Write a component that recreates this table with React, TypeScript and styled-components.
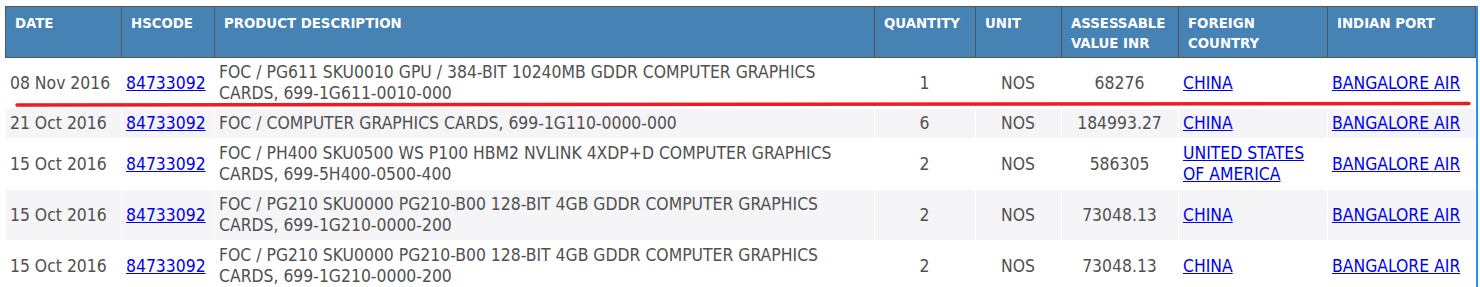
import styled, { createGlobalStyle } from "styled-components"

type Row = {
  date: string
  hscode: string
  description: string
  quantity: string
  unit: string
  value: string
  country: string
  port: string
}

const rows: Row[] = [
  {
    date: "08 Nov 2016",
    hscode: "84733092",
    description: "FOC / PG611 SKU0010 GPU / 384-BIT 10240MB GDDR COMPUTER GRAPHICS CARDS, 699-1G611-0010-000",
    quantity: "1",
    unit: "NOS",
    value: "68276",
    country: "CHINA",
    port: "BANGALORE AIR",
  },
  {
    date: "21 Oct 2016",
    hscode: "84733092",
    description: "FOC / COMPUTER GRAPHICS CARDS, 699-1G110-0000-000",
    quantity: "6",
    unit: "NOS",
    value: "184993.27",
    country: "CHINA",
    port: "BANGALORE AIR",
  },
  {
    date: "15 Oct 2016",
    hscode: "84733092",
    description: "FOC / PH400 SKU0500 WS P100 HBM2 NVLINK 4XDP+D COMPUTER GRAPHICS CARDS, 699-5H400-0500-400",
    quantity: "2",
    unit: "NOS",
    value: "586305",
    country: "UNITED STATES OF AMERICA",
    port: "BANGALORE AIR",
  },
  {
    date: "15 Oct 2016",
    hscode: "84733092",
    description: "FOC / PG210 SKU0000 PG210-B00 128-BIT 4GB GDDR COMPUTER GRAPHICS CARDS, 699-1G210-0000-200",
    quantity: "2",
    unit: "NOS",
    value: "73048.13",
    country: "CHINA",
    port: "BANGALORE AIR",
  },
  {
    date: "15 Oct 2016",
    hscode: "84733092",
    description: "FOC / PG210 SKU0000 PG210-B00 128-BIT 4GB GDDR COMPUTER GRAPHICS CARDS, 699-1G210-0000-200",
    quantity: "2",
    unit: "NOS",
    value: "73048.13",
    country: "CHINA",
    port: "BANGALORE AIR",
  },
]

const columns = [
  { title: "DATE", width: 116 },
  { title: "HSCODE", width: 93 },
  { title: "PRODUCT DESCRIPTION", width: 660 },
  { title: "QUANTITY", width: 101 },
  { title: "UNIT", width: 86 },
  { title: "ASSESSABLE VALUE INR", width: 117 },
  { title: "FOREIGN COUNTRY", width: 149 },
  { title: "INDIAN PORT", width: 148 },
]

export default function App() {
  return (
    <>
      <GlobalStyle />
      <Page>
        <Frame>
          <Table>
            <colgroup>
              {columns.map((c) => (
                <col key={c.title} style={{ width: c.width }} />
              ))}
            </colgroup>
            <thead>
              <tr>
                {columns.map((c) => (
                  <Th key={c.title}>{c.title}</Th>
                ))}
              </tr>
            </thead>
            <tbody>
              {rows.map((r, i) => (
                <Tr key={i} $striped={i % 2 === 1}>
                  <Td>{r.date}</Td>
                  <Td><Link href="#">{r.hscode}</Link></Td>
                  <Td>{r.description}</Td>
                  <Td $center>{r.quantity}</Td>
                  <Td $center>{r.unit}</Td>
                  <Td $center>{r.value}</Td>
                  <Td><Link href="#">{r.country}</Link></Td>
                  <Td><Link href="#">{r.port}</Link></Td>
                </Tr>
              ))}
            </tbody>
          </Table>
        </Frame>
        {/* hand drawn red underline over the first record */}
        <Marker viewBox="0 0 1480 287" width="1480" height="287">
          <path d="M17 105 Q 740 104.8 1469 103.5" stroke="#ec1c24" strokeWidth="3.4" fill="none" strokeLinecap="round" />
        </Marker>
      </Page>
    </>
  )
}

const GlobalStyle = createGlobalStyle`
  body {
    margin: 0;
    background: #fff;
    font-family: "DejaVu Sans Condensed", "DejaVu Sans", Verdana, sans-serif;
  }
`

const Page = styled.div`
  position: relative;
  width: 1480px;
  height: 287px;
  overflow: hidden;
  padding: 6px 0 0 5px;
  box-sizing: border-box;
`

const Frame = styled.div`
  width: 1470px;
  padding-right: 1px;
  border-right: 2px solid #2f8ff0;
`

const Table = styled.table`
  width: 1470px;
  table-layout: fixed;
  border-collapse: collapse;
  font-stretch: condensed;
`

const Th = styled.th`
  background: #4682b4;
  color: #fff;
  border: 1px solid #555;
  text-align: left;
  vertical-align: top;
  font-weight: bold;
  font-size: 14.8px;
  line-height: 20px;
  padding: 6px 9px 4px;
  height: 40px;
`

const Tr = styled.tr<{ $striped: boolean }>`
  background: ${(p) => (p.$striped ? "#f5f5f7" : "#fff")};
`

const Td = styled.td<{ $center?: boolean }>`
  border: 1px solid #fff;
  color: #505050;
  font-size: 17.4px;
  line-height: 21px;
  padding: 4px 5px 4px 4px;
  text-align: ${(p) => (p.$center ? "center" : "left")};
  vertical-align: middle;
`

const Link = styled.a`
  color: #0000ee;
  text-decoration: underline;
`

const Marker = styled.svg`
  position: absolute;
  top: 0;
  left: 0;
  pointer-events: none;
`
